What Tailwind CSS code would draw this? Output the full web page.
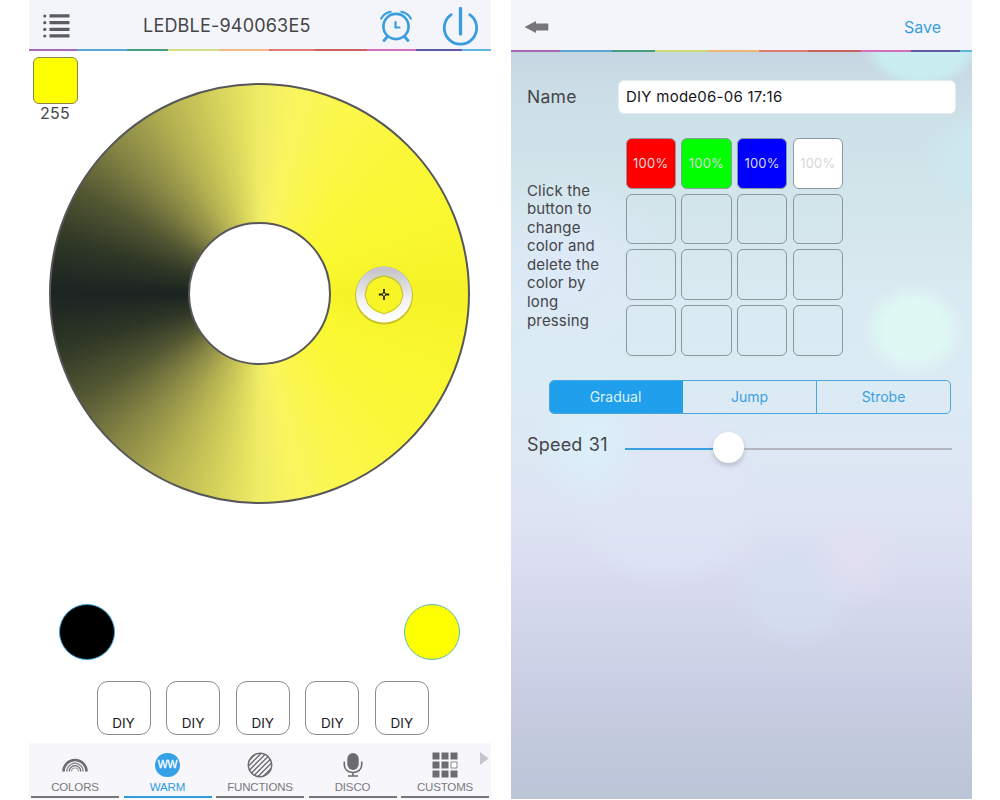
<!DOCTYPE html>
<html lang="en">
<head>
<meta charset="utf-8">
<title>LEDBLE</title>
<script src="https://cdn.jsdelivr.net/npm/@tailwindcss/browser@4"></script>
</head>
<body class="bg-white">
<main class="flex h-[800px] w-[1000px] gap-5 overflow-hidden bg-white pl-[29px] font-['Inter','Liberation_Sans',sans-serif] text-[#454548]">

  <!-- Colour wheel screen -->
  <section class="flex h-[799px] w-[462px] flex-col">
    <header class="flex h-[49px] shrink-0 items-center bg-[#f4f5fa]">
      <svg class="mt-1 ml-[14px] h-[25px] w-[28px]" viewBox="0 0 28 25" fill="#5c5c60">
        <circle cx="1.8" cy="2" r="1.6"/><circle cx="1.8" cy="8.7" r="1.6"/><circle cx="1.8" cy="15.4" r="1.6"/><circle cx="1.8" cy="22" r="1.6"/>
        <rect x="6.500" y=".3" width="20" height="3.300" rx=".5"/><rect x="6.500" y="7" width="20" height="3.300" rx=".5"/><rect x="6.500" y="13.700" width="20" height="3.300" rx=".5"/><rect x="6.500" y="20.300" width="20" height="3.300" rx=".5"/>
      </svg>
      <h1 class="mt-[2px] ml-[72px] w-[168px] whitespace-nowrap text-[18px] tracking-[0.2px]">LEDBLE-940063E5</h1>
      <svg class="mt-[2px] ml-[69px] h-[32px] w-[32px]" viewBox="380 10 32 32" fill="none" stroke="#3a9de0" stroke-linecap="round">
        <circle cx="396" cy="26.500" r="12.600" stroke-width="2.600"/>
        <path d="M395.500 22v5.500h4" stroke-width="2.200"/>
        <path d="M387.500 36.500l-3.500 4M404.500 36.500l3.500 4" stroke-width="2.800"/>
        <path d="M381.200 18.500Q384 13 390.500 11.800M410.800 18.500Q408 13 401.500 11.800" stroke-width="2.200"/>
      </svg>
      <svg class="mt-[2px] ml-[29px] h-[40px] w-[38px]" viewBox="441 6 38 40" fill="none" stroke="#3a9de0" stroke-width="2.800" stroke-linecap="round">
        <path d="M451.200 14.700A16.200 16.200 0 1 0 469.700 14.700"/>
        <path d="M460.500 8.500v25.500" stroke-width="3.300"/>
      </svg>
    </header>
    <div class="flex h-[2px] shrink-0">
      <i class="w-[48px] bg-[#a66bb8]"></i><i class="w-[50px] bg-[#5da5d4]"></i><i class="w-[41px] bg-[#459f7c]"></i><i class="w-[51px] bg-[#d3df82]"></i><i class="w-[50px] bg-[#f0bc84]"></i><i class="w-[46px] bg-[#df7c72]"></i><i class="w-[52px] bg-[#c9605f]"></i><i class="w-[49px] bg-[#d66fbb]"></i><i class="w-[46px] bg-[#6059a3]"></i><i class="flex-1 bg-[#61b8dc]"></i>
    </div>

    <div class="relative flex h-[454px] shrink-0 pt-[32px] pl-[20px]">
      <div class="absolute top-[6px] left-[4px] flex w-[45px] flex-col items-start">
        <div class="h-[47px] w-[45px] rounded-[6px] border border-[#85854a] bg-[#ffff00]"></div>
        <span class="w-[44px] text-center text-[16px] leading-[18px] tracking-[0.3px]">255</span>
      </div>
      <div class="relative grid h-[421px] w-[421px] place-items-center rounded-full border-2 border-[#57575a] bg-[conic-gradient(from_90deg_at_50%_50%,#f5f227_0deg,#faf830_25deg,#faf739_45deg,#fbf74b_65deg,#faf55f_80deg,#efec65_90deg,#d6d35c_102deg,#b5b252_117deg,#848344_135deg,#525732_150deg,#2f3726_165deg,#1c2322_180deg,#2f3726_195deg,#525732_210deg,#848344_225deg,#b5b252_243deg,#d6d35c_258deg,#efec65_270deg,#faf55f_280deg,#fbf74b_295deg,#faf739_315deg,#faf830_335deg,#f5f227_360deg)] bg-origin-border">
        <div class="h-[143px] w-[143px] rounded-full border-2 border-[#57575a] bg-white"></div>
        <svg class="absolute top-[177px] left-[301px] h-[64px] w-[64px]" viewBox="352 262 64 64">
          <defs><linearGradient id="ring" x1="0" y1="0" x2="0" y2="1"><stop offset="0" stop-color="#c6c6cc"/><stop offset=".6" stop-color="#f1f1f4"/><stop offset="1" stop-color="#fff"/></linearGradient></defs>
          <circle cx="384" cy="295.500" r="24" fill="none" stroke="#8c8a18" stroke-opacity=".45" stroke-width="10"/>
          <circle cx="384" cy="294.500" r="23.500" fill="none" stroke="url(#ring)" stroke-width="9"/>
          <path d="M384 276l9 3 7 6 3 10-3 9-7 6-9 4-9-4-7-6-3-9 3-10 7-6z" fill="#f7f526" stroke="#b6b452" stroke-width=".8"/>
          <path d="M384 289v4M384 296v4M378.800 294.500h4M385.200 294.500h4" stroke="#24240a" stroke-width="1.800"/>
          <circle cx="384" cy="294.500" r="1.700" fill="#f7f526" stroke="#24240a" stroke-width="1"/>
        </svg>
      </div>
    </div>

    <div class="mt-[99px] flex justify-between pr-[31px] pl-[30px]">
      <div class="h-[56px] w-[56px] rounded-full border border-[#36a1dc] bg-black"></div>
      <div class="h-[56px] w-[56px] rounded-full border border-[#5bbcc0] bg-[#ffff00]"></div>
    </div>

    <div class="mt-[21px] flex gap-[15.600px] pl-[67.500px] text-[13.500px] text-[#202024]">
      <div class="flex h-[54px] w-[54px] items-end justify-center rounded-[11px] border border-[#8b8b8b] pb-[3px] leading-4">DIY</div>
      <div class="flex h-[54px] w-[54px] items-end justify-center rounded-[11px] border border-[#8b8b8b] pb-[3px] leading-4">DIY</div>
      <div class="flex h-[54px] w-[54px] items-end justify-center rounded-[11px] border border-[#8b8b8b] pb-[3px] leading-4">DIY</div>
      <div class="flex h-[54px] w-[54px] items-end justify-center rounded-[11px] border border-[#8b8b8b] pb-[3px] leading-4">DIY</div>
      <div class="flex h-[54px] w-[54px] items-end justify-center rounded-[11px] border border-[#8b8b8b] pb-[3px] leading-4">DIY</div>
    </div>

    <nav class="relative mt-[8px] flex h-[56px] gap-[4.500px] bg-[#f6f6fb] px-[2px] font-['Liberation_Sans',sans-serif] text-[11.500px] tracking-[-0.15px] text-[#7a7a7e]">
      <div class="flex h-[55px] w-[88px] flex-col items-center border-b-2 border-[#77777a]">
        <svg class="mt-[8px] h-[28px] w-[28px]" viewBox="0 0 28 28" fill="none" stroke="#6c6c6f"><path d="M2.500 20.500a11.500 11.500 0 0 1 23 0" stroke-width="2.600"/><path d="M5.800 20.500a8.200 8.200 0 0 1 16.400 0" stroke-width="1.500" stroke="#8d8d91"/><path d="M8.200 20.500a5.800 5.800 0 0 1 11.600 0" stroke-width="1.300"/><path d="M10.500 20.500a3.500 3.500 0 0 1 7 0" stroke-width="1.200" stroke="#a0a0a4"/></svg>
        <span class="leading-[17px]">COLORS</span>
      </div>
      <div class="flex h-[55px] w-[88px] flex-col items-center border-b-2 border-[#2f9ce0] text-[#2f9ce0]">
        <div class="mt-[10px] mb-[2px] flex h-[24px] w-[25px] items-center justify-center rounded-full bg-[#35a0e6] text-[10.500px] text-white [-webkit-text-stroke:0.3px_white]">WW</div>
        <span class="leading-[17px]">WARM</span>
      </div>
      <div class="flex h-[55px] w-[88px] flex-col items-center border-b-2 border-[#77777a]">
        <svg class="mt-[8px] h-[28px] w-[28px]" viewBox="0 0 28 28" fill="none" stroke="#6c6c6f" stroke-width="1.400"><defs><clipPath id="disc"><circle cx="14" cy="14" r="12"/></clipPath></defs><circle cx="14" cy="14" r="11.700"/><path clip-path="url(#disc)" d="M0 12.500L12.500 0M0 17.500L17.500 0M0 22.500L22.500 0M0 27.500L27.500 0M4.500 28L28 4.500M9.500 28L28 9.500M14.500 28L28 14.500"/></svg>
        <span class="leading-[17px]">FUNCTIONS</span>
      </div>
      <div class="flex h-[55px] w-[88px] flex-col items-center border-b-2 border-[#77777a]">
        <svg class="mt-[8px] h-[28px] w-[28px]" viewBox="0 0 28 28" fill="none" stroke="#6c6c6f" stroke-width="1.600"><rect x="8.300" y="2" width="11.400" height="17" rx="5.700" fill="#6c6c6f" stroke="none"/><path d="M5.300 10.500v3.500a8.700 7.500 0 0 0 17.400 0V10.500M14 21.500v4M9 25h10"/></svg>
        <span class="leading-[17px]">DISCO</span>
      </div>
      <div class="flex h-[55px] w-[88px] flex-col items-center border-b-2 border-[#77777a]">
        <svg class="mt-[8px] h-[28px] w-[28px]" viewBox="0 0 28 28" fill="#6c6c6f"><path d="M1.500 1.500h7v7h-7zM10.500 1.500h7v7h-7zM19.500 1.500h7v7h-7zM1.500 10.500h7v7h-7zM10.500 10.500h7v7h-7zM1.500 19.500h7v7h-7zM10.500 19.500h7v7h-7zM19.500 19.500h7v7h-7z"/><path d="M20 11h6v6h-6z" fill="#fff" stroke="#6c6c6f" stroke-width=".8"/></svg>
        <span class="leading-[17px]">CUSTOMS</span>
      </div>
      <svg class="absolute top-[9px] right-[2px] h-[13px] w-[9px]" viewBox="0 0 9 13" fill="#c4c4c9"><path d="M0 0l8.500 6.500L0 13z"/></svg>
    </nav>
  </section>

  <!-- Custom mode editor -->
  <section class="flex h-[799px] w-[461px] flex-col">
    <header class="flex h-[50px] shrink-0 items-center justify-between bg-[#f4f5fa] pr-[31px] pl-[13px]">
      <svg class="mt-1 h-[12px] w-[25px]" viewBox="0 0 25 12" fill="#77777a"><path d="M.5 6L12 0v2.500h12.300v7H12V12z"/></svg>
      <span class="mt-[4px] text-[16px] text-[#3a9fe0]">Save</span>
    </header>
    <div class="flex h-[2px] shrink-0">
      <i class="w-[49px] bg-[#a66bb8]"></i><i class="w-[52px] bg-[#5da5d4]"></i><i class="w-[43px] bg-[#459f7c]"></i><i class="w-[53px] bg-[#cfdb72]"></i><i class="w-[51px] bg-[#efb878]"></i><i class="w-[49px] bg-[#df7c72]"></i><i class="w-[53px] bg-[#c9605f]"></i><i class="w-[50px] bg-[#d66fbb]"></i><i class="w-[49px] bg-[#6059a3]"></i><i class="flex-1 bg-[#61b8dc]"></i>
    </div>

    <div class="flex flex-1 flex-col bg-[radial-gradient(ellipse_60px_44px_at_411px_-8px,#c8ecef_75%,#c8ecef00_100%),radial-gradient(ellipse_62px_58px_at_474px_108px,#caeaf0aa_55%,#caeaf000_100%),radial-gradient(ellipse_51px_47px_at_403px_278px,#dff8f4_60%,#dff8f400_100%),radial-gradient(ellipse_95px_90px_at_55px_210px,#dde9f8_10%,#dde9f800_100%),radial-gradient(ellipse_58px_70px_at_80px_392px,#d9f1fbcc_10%,#d9f1fb00_100%),radial-gradient(ellipse_105px_95px_at_155px_442px,#dfe5f6aa_70%,#dfe5f600_100%),radial-gradient(ellipse_48px_48px_at_345px_508px,#e4dff1aa_20%,#e4dff100_100%),radial-gradient(ellipse_64px_62px_at_286px_538px,#d4dff1aa_55%,#d4dff100_100%),linear-gradient(180deg,#c6d7e3_0px,#cddfe7_55px,#d2e5eb_140px,#daeaf2_250px,#dbebf4_330px,#dde8f4_400px,#dde3f3_470px,#d8dbef_530px,#ced3e8_600px,#c3cade_680px,#bbc5d8_747px)]">
      <div class="mt-[28px] flex items-center pl-4">
        <label class="w-[91px] text-[17.500px] leading-[34px] tracking-[0.3px]">Name</label>
        <div class="h-[34px] w-[338px] rounded-[6px] border border-[#e2edf0] bg-white pl-[7px] text-[15px] leading-[32px] tracking-[0.25px] text-[#17171b]">DIY mode06-06 17:16</div>
      </div>

      <div class="mt-[24px] flex pl-4">
        <p class="mt-[43.500px] w-[98.500px] whitespace-nowrap text-[15px] leading-[18.600px] tracking-[0.15px]">Click the<br>button to<br>change<br>color and<br>delete the<br>color by<br>long<br>pressing</p>
        <div class="grid grid-cols-[repeat(4,50.500px)] grid-rows-[repeat(4,50.500px)] gap-[5.200px] text-[13px] tracking-[0.2px] text-[#d8d8d8]">
          <div class="grid place-items-center rounded-[6px] border border-[#8b989c] bg-[#ff0000]">100%</div>
          <div class="grid place-items-center rounded-[6px] border border-[#8b989c] bg-[#00ff00]">100%</div>
          <div class="grid place-items-center rounded-[6px] border border-[#8b989c] bg-[#0000ff]">100%</div>
          <div class="grid place-items-center rounded-[6px] border border-[#8b989c] bg-white">100%</div>
          <div class="rounded-[6px] border border-[#8b989c]"></div><div class="rounded-[6px] border border-[#8b989c]"></div><div class="rounded-[6px] border border-[#8b989c]"></div><div class="rounded-[6px] border border-[#8b989c]"></div>
          <div class="rounded-[6px] border border-[#8b989c]"></div><div class="rounded-[6px] border border-[#8b989c]"></div><div class="rounded-[6px] border border-[#8b989c]"></div><div class="rounded-[6px] border border-[#8b989c]"></div>
          <div class="rounded-[6px] border border-[#8b989c]"></div><div class="rounded-[6px] border border-[#8b989c]"></div><div class="rounded-[6px] border border-[#8b989c]"></div><div class="rounded-[6px] border border-[#8b989c]"></div>
        </div>
      </div>

      <div class="mt-[24px] ml-[38px] grid h-[34px] w-[402px] grid-cols-[133px_133px_134px] overflow-hidden rounded-[5px] border border-[#4ba6de] text-center text-[14px] leading-[32px] text-[#3a9fe0]">
        <div class="bg-[#1f9fec] pr-[2px] text-[#dff1fb]">Gradual</div>
        <div>Jump</div>
        <div class="border-l border-[#4ba6de]">Strobe</div>
      </div>

      <div class="mt-[14px] flex pl-4">
        <span class="w-[98px] whitespace-nowrap text-[18px] leading-[34px] tracking-[0.2px] [word-spacing:1px]">Speed 31</span>
        <div class="mt-[4px] flex h-[31px] items-center">
          <div class="mt-[3px] h-[2px] w-[88px] bg-[#3a9fe0]"></div>
          <div class="h-[31px] w-[31px] rounded-full bg-white shadow-[0_3px_5px_rgba(0,0,0,0.18)]"></div>
          <div class="mt-[3px] h-[2px] w-[208px] bg-[#b4b4bc]"></div>
        </div>
      </div>
    </div>
  </section>
</main>
</body>
</html>
